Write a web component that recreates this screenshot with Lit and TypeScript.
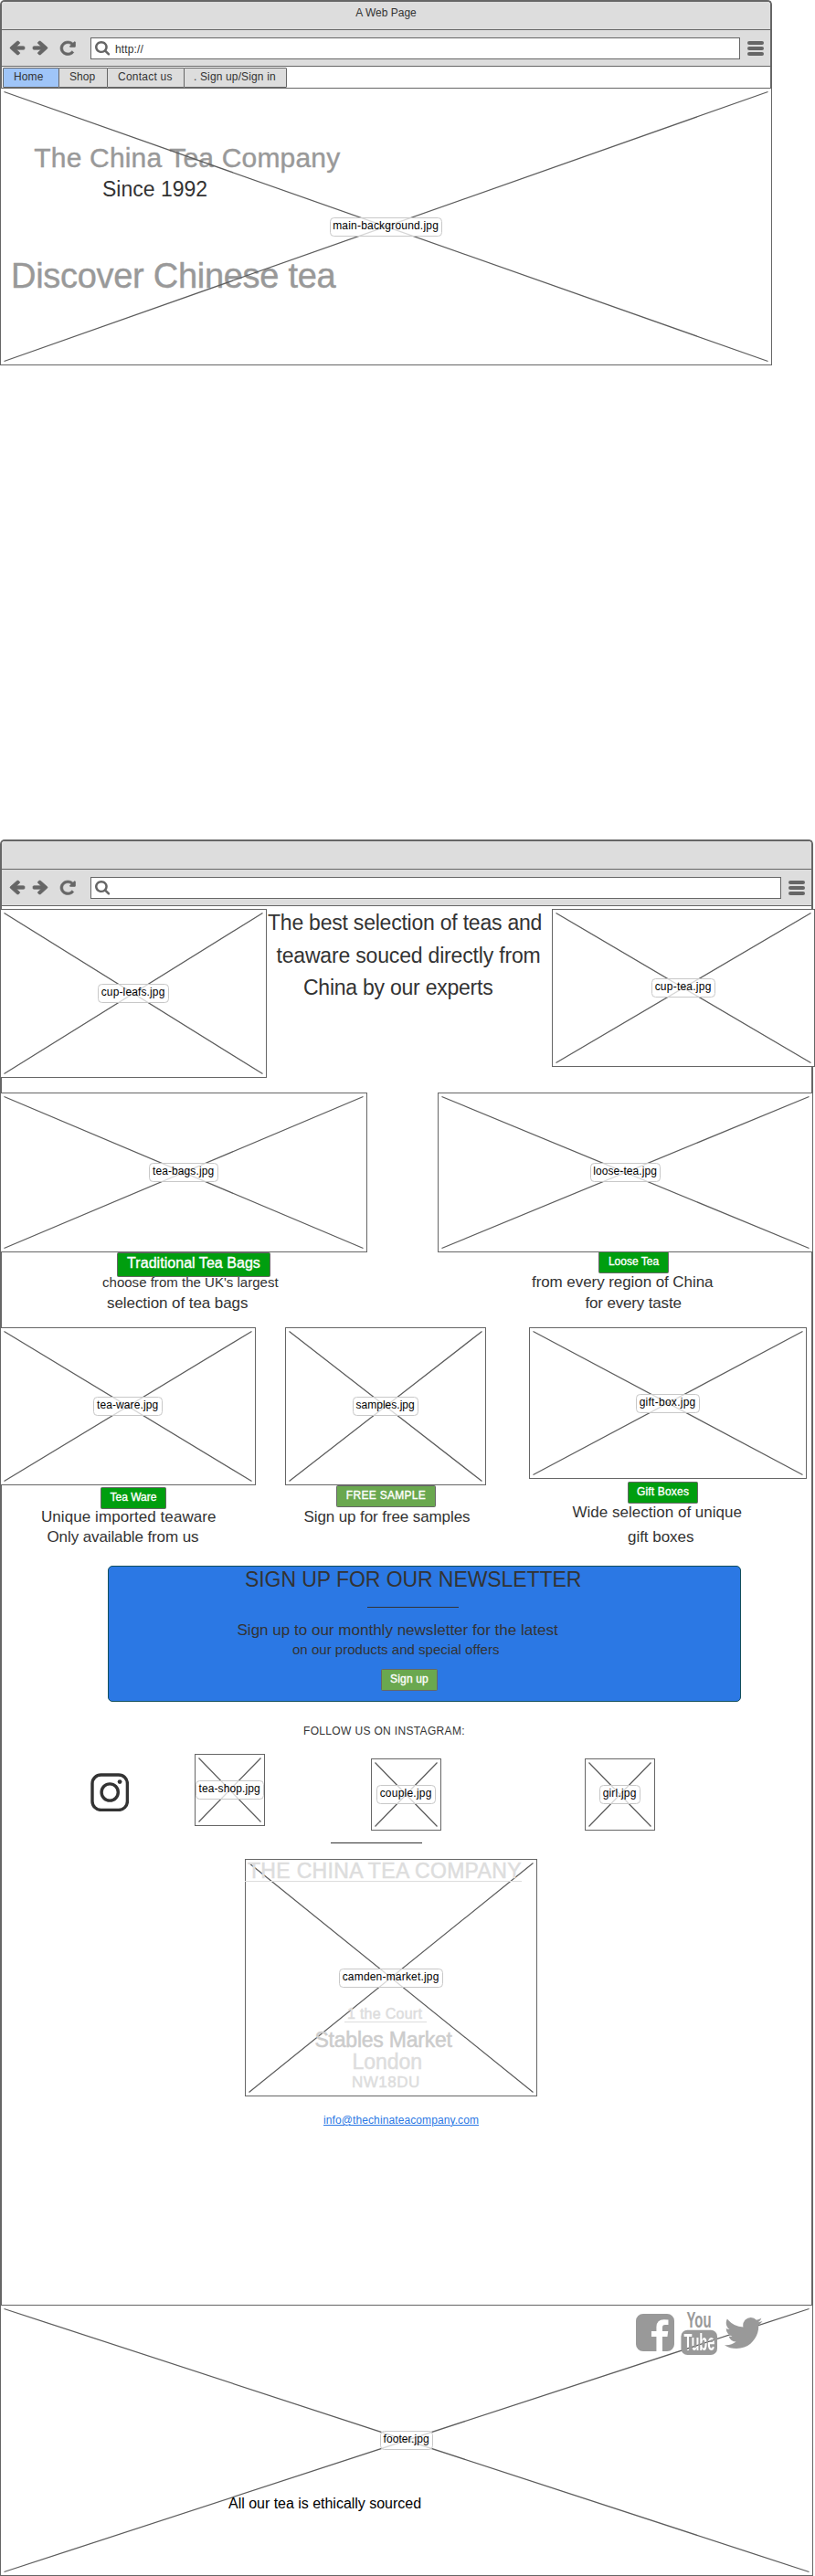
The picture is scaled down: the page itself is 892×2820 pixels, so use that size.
import { LitElement, html, svg, css } from "lit";
import { customElement, property } from "lit/decorators.js";

const ARROW =
  "M1536 896v128q0 53-32.5 90.5t-84.5 37.5h-704l293 294q38 36 38 90t-38 90l-75 76q-37 37-90 37-52 0-91-37l-651-652q-37-37-37-90 0-52 37-91l651-650q38-38 91-38 52 0 90 38l75 74q38 38 38 91t-38 91l-293 293h704q52 0 84.5 37.5t32.5 90.5z";
const RELOAD =
  "M1664 256v448q0 26-19 45t-45 19h-448q-42 0-59-40-17-39 14-69l138-138q-148-137-349-137-104 0-198.5 40.5t-163.5 109.5-109.5 163.5-40.5 198.5 40.5 198.5 109.5 163.5 163.5 109.5 198.5 40.5q119 0 225-52t179-147q7-10 23-12 15 0 25 9l137 138q9 8 9.5 20.5t-7.5 22.5q-109 132-264 204.5t-327 72.5q-156 0-298-61t-245-164-164-245-61-298 61-298 164-245 245-164 298-61q147 0 284.5 55.5t244.5 156.5l130-129q29-31 70-14 39 17 39 59z";
const SEARCH =
  "M1216 832q0-185-131.5-316.5t-316.5-131.5-316.5 131.5-131.5 316.5 131.5 316.5 316.5 131.5 316.5-131.5 131.5-316.5zm512 832q0 52-38 90t-90 38q-54 0-90-38l-343-342q-179 124-399 124-143 0-273.5-55.5t-225-150-150-225-55.5-273.5 55.5-273.5 150-225 225-150 273.5-55.5 273.5 55.5 225 150 150 225 55.5 273.5q0 220-124 399l343 343q37 37 37 90z";
const FACEBOOK =
  "M1376 128q119 0 203.5 84.5t84.5 203.5v960q0 119-84.5 203.5t-203.5 84.5h-188v-595h199l30-232h-229v-148q0-56 23.5-84t91.5-28l122-1v-207q-63-9-178-9-136 0-217.5 80t-81.5 226v171h-200v232h200v595h-532q-119 0-203.5-84.5t-84.5-203.5v-960q0-119 84.5-203.5t203.5-84.5h960z";
const TWITTER =
  "M1684 408q-67 98-162 167 1 14 1 42 0 130-38 259.5t-115.5 248.5-184.5 210.5-258 146-323 54.5q-271 0-496-145 35 4 78 4 225 0 401-138-105-2-188-64.5t-114-159.5q33 5 61 5 43 0 85-11-112-23-185.5-111.5t-73.5-205.5v-4q68 38 146 41-66-44-105-115t-39-154q0-88 44-163 121 149 294.5 238.5t371.5 99.5q-8-38-8-74 0-134 94.5-228.5t228.5-94.5q140 0 236 102 109-21 205-78-37 115-142 178 93-10 186-50z";

/** Crossed-out image box with its file name in the middle. */
@customElement("wire-image")
export class WireImage extends LitElement {
  @property({ type: Number }) w = 100;
  @property({ type: Number }) h = 100;
  @property({ type: Number }) track = 0.12;
  @property() label = "";

  static styles = css`
    :host {
      display: grid;
      grid-template: 100% / 100%;
      justify-items: start;
      background: #fff;
      position: relative;
      flex: none;
    }
    svg, .content, .tag { grid-area: 1 / 1; }
    svg { display: block; z-index: 1; }
    .content { width: 100%; z-index: 0; }
    :host([above]) .content { z-index: 1; }
    .tag {
      z-index: 2;
      place-self: center;
      box-sizing: border-box;
      height: 21px;
      margin-top: 1px;
      padding: 1px 3.4px 0 2.6px;
      border: 1px solid #c8c8c8;
      border-radius: 4.5px;
      background: rgba(255, 255, 255, 0.75);
      font: 12px/14px "Liberation Sans", Arial, sans-serif;
      color: #000;
      white-space: nowrap;
    }
    :host([odd]) .tag { margin-top: 0; }
  `;

  render() {
    const { w, h } = this;
    return html`
      <svg width=${w} height=${h} fill="none" stroke="#666">
        <rect x=".5" y=".5" width=${w - 1} height=${h - 1} />
        <path stroke="#5c5c5c" stroke-width="1.25" d="M4.5 4.5L${w - 4.5} ${h - 4.5}M${w - 4.5} 4.5L4.5 ${h - 4.5}" />
      </svg>
      <div class="content"><slot></slot></div>
      <span class="tag" style="letter-spacing:${this.track}px">${this.label}</span>
    `;
  }
}

/** Browser window chrome: title bar, toolbar and page body. */
@customElement("wire-window")
export class WireWindow extends LitElement {
  @property() heading = "";
  @property() url = "";

  static styles = css`
    :host {
      display: block;
      box-sizing: border-box;
      border: 2px solid #666;
      border-bottom: 0;
      border-radius: 5px 5px 0 0;
      background: #fff;
      font: 12px/14px "Liberation Sans", Arial, sans-serif;
      color: #333;
    }
    .title {
      height: 30px;
      box-sizing: border-box;
      padding-top: 5px;
      text-align: center;
      background: #ddd;
      border-radius: 3px 3px 0 0;
    }
    .bar {
      display: flex;
      align-items: flex-start;
      box-sizing: border-box;
      height: 41px;
      padding: 8px 7px 0 9px;
      background: #ddd;
      border: solid #666;
      border-width: 1px 0;
    }
    .bar > svg { display: block; margin-top: 4px; flex: none; fill: #666; overflow: visible; }
    .back, .fwd, .reload { stroke: #666; stroke-width: 60px; }
    .fwd { transform: scaleX(-1); margin-left: 9px; }
    .reload { margin-left: 14px; }
    .address {
      flex: 1;
      display: flex;
      box-sizing: border-box;
      height: 24px;
      margin: 0 8px 0 16.5px;
      border: 1px solid #666;
      background: #fff;
      padding-left: 4px;
    }
    .address svg { fill: #666; margin-top: 3px; display: block; }
    .address span { margin: 5px 0 0 5.7px; letter-spacing: 0.136px; }
    .body { margin: 0 -2px; }
  `;

  render() {
    const arrow = (cls: string) => svg`<svg class=${cls} width="16" height="15" viewBox="64 181 1472 1558"
      preserveAspectRatio="none"><path d=${ARROW} /></svg>`;
    return html`
      <div class="title">${this.heading}</div>
      <div class="bar">
        ${arrow("back")} ${arrow("fwd")}
        <svg class="reload" width="16.5" height="15.5" viewBox="128 128 1536 1536" preserveAspectRatio="none"><path d=${RELOAD} /></svg>
        <div class="address">
          <svg width="16.3" height="15.5" viewBox="64 128 1664 1664" preserveAspectRatio="none"><path d=${SEARCH} /></svg>
          ${this.url ? html`<span>${this.url}</span>` : ""}
        </div>
        <svg class="menu" width="18" height="17">
          <rect width="18" height="4" rx="2" /><rect y="6" width="18" height="4" rx="2" /><rect y="12" width="18" height="4" rx="2" />
        </svg>
      </div>
      <div class="body"><slot></slot></div>
    `;
  }
}

@customElement("app-root")
export class AppRoot extends LitElement {
  static styles = css`
    :host {
      display: block;
      width: 892px;
      height: 2820px;
      background: #fff;
      font: 12px/14px "Liberation Sans", Arial, sans-serif;
      color: #333;
    }
    p, h1, h2, nav { margin: 0; font-weight: 400; }
    p, h1, h2, a, .btn, .tab { white-space: nowrap; }
    .s15 { font-size: 15px; line-height: 17px; }
    .s16 { font-size: 16px; line-height: 17px; }
    .s17 { font-size: 17px; line-height: 19px; }
    .s23 { font-size: 23px; line-height: 26px; }
    .win1 { width: 845px; height: 400px; }
    .win2 { width: 890px; height: 1901px; margin-top: 519px; }

    .tabs { display: flex; height: 23px; padding: 1px 0 0 3px; box-sizing: border-box; }
    .tab {
      box-sizing: border-box;
      height: 22px;
      padding: 2px 0 0 10px;
      border: 1px solid #666;
      border-radius: 1px;
      background: #ddd;
      letter-spacing: 0.14px;
    }
    .tab + .tab { margin-left: -1px; }
    .home { width: 62px; padding-left: 11px; background: #9fc5f8; }
    .shop { width: 54px; padding-left: 11px; letter-spacing: 0.05px; }
    .contact { width: 85px; padding-left: 11px; letter-spacing: 0.237px; }
    .sign { width: 113px; }

    .name { margin: 60px 0 0 37.3px; font-size: 30px; line-height: 33px; letter-spacing: 0.18px; color: #999; }
    .since { margin: 5px 0 0 112px; }
    .discover { margin: 61px 0 0 12px; font-size: 38px; line-height: 42px; letter-spacing: -0.29px; color: #999; }
    .name, .discover { -webkit-text-stroke: 0.4px #999; }

    .intro { display: grid; grid-template-columns: 292px 312px 288px; align-items: start; height: 204px; padding-top: 3px; box-sizing: border-box; width: 892px; }
    .i1 { margin: 2px 0 0 1px; letter-spacing: -0.226px; }
    .i2 { margin: 10px 0 0 10.5px; letter-spacing: -0.18px; }
    .i3 { margin: 9px 0 0 40px; letter-spacing: -0.24px; }

    .row { display: flex; align-items: flex-start; }
    .two { height: 257px; }
    .three { height: 261px; }
    .loose { margin-left: 77px; }
    .samples { margin-left: 32px; }
    .gift { margin-left: 47px; }
    .card { display: flex; flex-direction: column; align-items: flex-start; flex: none; }
    .w402 { width: 402px; } .w411 { width: 411px; } .w280 { width: 280px; } .w220 { width: 220px; } .w304 { width: 304px; }

    .btn {
      position: relative;
      display: block;
      box-sizing: border-box;
      height: 24px;
      padding: 3px 0 0;
      border: 1px solid #666;
      border-radius: 1.5px;
      background: #009e0f;
      color: #fff;
      text-align: center;
      font: inherit;
      -webkit-text-stroke: 0.35px #fff;
    }
    .soft { background: #6aa84f; }
    .b-trad { width: 168px; height: 27px; margin-left: 128px; padding-top: 2px; font-size: 16px; line-height: 17px; letter-spacing: 0.04px; }
    .b-loose { width: 77px; margin: -1px 0 0 176px; }
    .b-ware { width: 72px; margin: 2px 0 0 110px; }
    .b-free { width: 109px; margin-left: 56px; letter-spacing: 0.298px; }
    .b-gift { width: 77px; margin: 3px 0 0 108px; letter-spacing: 0.183px; }
    .b-sign { width: 62px; margin: 13px 0 0 298px; letter-spacing: 0.16px; }

    .c1 { margin: -3px 0 0 112px; letter-spacing: 0.02px; }
    .c2 { margin: 5px 0 0 117px; letter-spacing: -0.072px; }
    .c3 { margin: 0 0 0 103px; letter-spacing: -0.074px; }
    .c4 { margin: 4px 0 0 161.5px; letter-spacing: -0.161px; }
    .c5 { margin: -1px 0 0 45px; letter-spacing: 0.069px; }
    .c6 { margin: 3px 0 0 51.5px; letter-spacing: -0.104px; }
    .c7 { margin: 1px 0 0 20.5px; letter-spacing: -0.098px; }
    .c8 { margin: 0 0 0 47.5px; letter-spacing: 0.01px; }
    .c9 { margin: 8px 0 0 108px; letter-spacing: -0.029px; }

    .news {
      box-sizing: border-box;
      width: 693px;
      height: 149px;
      margin-left: 118px;
      padding-top: 1px;
      border: 1px solid #134f5c;
      border-radius: 5px;
      background: #2b78e4;
    }
    .n1 { margin-left: 149px; letter-spacing: -0.07px; }
    .n2 { margin: 15px 0 0 140.5px; letter-spacing: 0.014px; }
    .n3 { margin: 3px 0 0 201px; letter-spacing: 0.024px; }
    .rule { width: 100px; height: 1px; background: #333; }
    .r1 { margin: 17px 0 0 283px; }
    .r2 { margin: 13px 0 0 362px; }

    .follow { margin: 25px 0 0 332px; letter-spacing: 0.34px; }
    .insta { display: flex; align-items: flex-start; height: 84px; margin-top: 18px; }
    .insta > svg { margin: 21px 0 0 99px; flex: none; }
    .g1 { margin-left: 72px; }
    .g2 { margin: 5px 0 0 116px; }
    .g3 { margin: 5px 0 0 157px; }

    .camden { width: 320px; margin: 17px 0 0 268px; color: #ddd; }
    .camden p { -webkit-text-stroke: 0.5px; }
    .m1 { box-sizing: border-box; width: 303px; height: 25px; padding-left: 3px; border-bottom: 1px solid #ddd; letter-spacing: 0.32px; }
    .m2 { box-sizing: border-box; width: 90px; height: 18px; margin: 136px 0 0 109px; padding-left: 3px; border-bottom: 1px solid #ddd; letter-spacing: 0.27px; }
    .m3 { margin: 6px 0 0 76.5px; letter-spacing: -0.231px; color: #ccc; }
    .m4 { margin: -2px 0 0 117.5px; letter-spacing: -0.05px; }
    .m5 { margin: 0 0 0 117px; letter-spacing: 0.498px; }
    .mail { display: block; width: max-content; margin: 19px 0 0 354px; letter-spacing: 0.1px; color: #2b78e4; text-decoration: underline; text-underline-offset: 1px; text-decoration-thickness: 1px; }

    .footer { margin-top: 195px; }
    .social { display: flex; align-items: flex-start; height: 56px; padding: 7px 0 0 696px; fill: #999; }
    .social svg { flex: none; overflow: visible; }
    .fb { margin-top: 3px; }
    .yt { margin: 0 0 0 7px; font-family: "Liberation Sans", Arial, sans-serif; font-weight: 700; }
    .tw { margin: 7px 0 0 6.5px; }
    .ethic { margin: 146px 0 0 250px; letter-spacing: -0.02px; color: #000; }
  `;

  render() {
    return html`
      <wire-window class="win1" heading="A Web Page" url="http://">
        <nav class="tabs">
          <span class="tab home">Home</span><span class="tab shop">Shop</span><span class="tab contact">Contact us</span><span class="tab sign">. Sign up/Sign in</span>
        </nav>
        <wire-image w="845" h="304" label="main-background.jpg" track="0.2">
          <h1 class="name">The China Tea Company</h1>
          <p class="s23 since">Since 1992</p>
          <p class="discover">Discover Chinese tea</p>
        </wire-image>
      </wire-window>

      <wire-window class="win2">
        <section class="intro">
          <wire-image odd w="292" h="185" label="cup-leafs.jpg" track="0.136"></wire-image>
          <div>
            <p class="s23 i1">The best selection of teas and</p>
            <p class="s23 i2">teaware souced directly from</p>
            <p class="s23 i3">China by our experts</p>
          </div>
          <wire-image odd w="288" h="173" label="cup-tea.jpg" track="0.23"></wire-image>
        </section>

        <section class="row two">
          <div class="card w402">
            <wire-image odd w="402" h="175" label="tea-bags.jpg" track="0.102"></wire-image>
            <span class="btn b-trad">Traditional Tea Bags</span>
            <p class="s15 c1">choose from the UK's largest</p>
            <p class="s17 c2">selection of tea bags</p>
          </div>
          <div class="card w411 loose">
            <wire-image odd w="411" h="175" label="loose-tea.jpg" track="0.08"></wire-image>
            <span class="btn b-loose">Loose Tea</span>
            <p class="s17 c3">from every region of China</p>
            <p class="s17 c4">for every taste</p>
          </div>
        </section>

        <section class="row three">
          <div class="card w280">
            <wire-image odd w="280" h="173" label="tea-ware.jpg" track="0.104"></wire-image>
            <span class="btn b-ware">Tea Ware</span>
            <p class="s17 c5">Unique imported teaware</p>
            <p class="s17 c6">Only available from us</p>
          </div>
          <div class="card w220 samples">
            <wire-image odd w="220" h="173" label="samples.jpg" track="0.014"></wire-image>
            <span class="btn soft b-free">FREE SAMPLE</span>
            <p class="s17 c7">Sign up for free samples</p>
          </div>
          <div class="card w304 gift">
            <wire-image w="304" h="166" label="gift-box.jpg" track="0.27"></wire-image>
            <span class="btn b-gift">Gift Boxes</span>
            <p class="s17 c8">Wide selection of unique</p>
            <p class="s17 c9">gift boxes</p>
          </div>
        </section>

        <section class="news">
          <h2 class="s23 n1">SIGN UP FOR OUR NEWSLETTER</h2>
          <div class="rule r1"></div>
          <p class="s17 n2">Sign up to our monthly newsletter for the latest</p>
          <p class="s15 n3">on our products and special offers</p>
          <span class="btn soft b-sign">Sign up</span>
        </section>

        <p class="follow">FOLLOW US ON INSTAGRAM:</p>
        <section class="insta">
          <svg width="42" height="42" fill="none" stroke="#333">
            <rect x="2" y="2" width="38.4" height="38.4" rx="9.5" stroke-width="3.4" />
            <circle cx="21.2" cy="21" r="9.1" stroke-width="3.4" />
            <circle cx="32.1" cy="9.6" r="2.4" fill="#333" stroke="none" />
          </svg>
          <wire-image odd class="g1" w="77" h="79" label="tea-shop.jpg" track="0.102"></wire-image>
          <wire-image odd class="g2" w="77" h="79" label="couple.jpg" track="0.218"></wire-image>
          <wire-image odd class="g3" w="77" h="79" label="girl.jpg" track="0.189"></wire-image>
        </section>
        <div class="rule r2"></div>

        <wire-image above class="camden" w="320" h="260" label="camden-market.jpg" track="0.185">
          <p class="s23 m1">THE CHINA TEA COMPANY</p>
          <p class="s16 m2">1 the Court</p>
          <p class="s23 m3">Stables Market</p>
          <p class="s23 m4">London</p>
          <p class="s17 m5">NW18DU</p>
        </wire-image>
        <a class="mail">info@thechinateacompany.com</a>

        <wire-image above odd class="footer" w="890" h="297" label="footer.jpg" track="0.09">
          <div class="social">
            <svg class="fb" width="42" height="41" viewBox="128 128 1536 1536" preserveAspectRatio="none"><path d=${FACEBOOK} /></svg>
            <svg class="yt" width="41" height="49">
              <mask id="cut">
                <rect width="41" height="49" fill="#fff" />
                <text x="3.5" y="43.2" font-size="25.5" textLength="34" lengthAdjust="spacingAndGlyphs" fill="#000">Tube</text>
              </mask>
              <text x="6.5" y="17.8" font-size="24.5" textLength="27" lengthAdjust="spacingAndGlyphs">You</text>
              <rect x=".4" y="20.7" width="39.6" height="27.3" rx="7" mask="url(#cut)" />
            </svg>
            <svg class="tw" width="41.5" height="34" viewBox="108 256 1576 1280" preserveAspectRatio="none"><path d=${TWITTER} /></svg>
          </div>
          <p class="s16 ethic">All our tea is ethically sourced</p>
        </wire-image>
      </wire-window>
    `;
  }
}
